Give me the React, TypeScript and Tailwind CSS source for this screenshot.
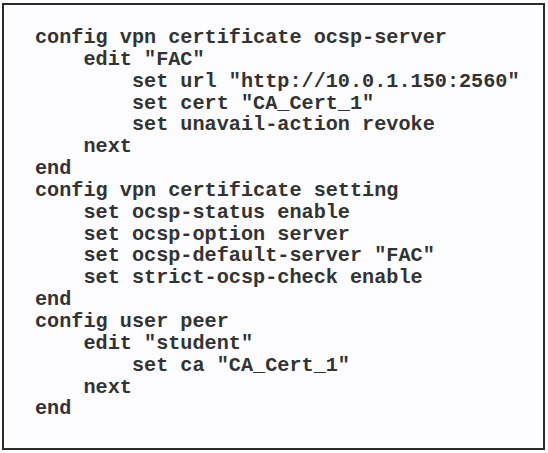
const lines = [
  'config vpn certificate ocsp-server',
  '    edit "FAC"',
  '        set url "http://10.0.1.150:2560"',
  '        set cert "CA_Cert_1"',
  '        set unavail-action revoke',
  '    next',
  'end',
  'config vpn certificate setting',
  '    set ocsp-status enable',
  '    set ocsp-option server',
  '    set ocsp-default-server "FAC"',
  '    set strict-ocsp-check enable',
  'end',
  'config user peer',
  '    edit "student"',
  '        set ca "CA_Cert_1"',
  '    next',
  'end',
];

export default function App() {
  return (
    <div className="w-[548px] h-[453px] bg-white pl-[2px] pt-[3px]">
      <div className="w-[543px] h-[447px] border-2 border-[#2b2b2b] bg-[#fdfdff] pl-[31px] pt-[22px]">
        <pre className="font-['Courier_New','Nimbus_Mono_PS','FreeMono','Liberation_Mono',monospace] font-bold text-[20.2px] leading-[21.85px] text-[#333333]">
          {lines.join('\n')}
        </pre>
      </div>
    </div>
  );
}
